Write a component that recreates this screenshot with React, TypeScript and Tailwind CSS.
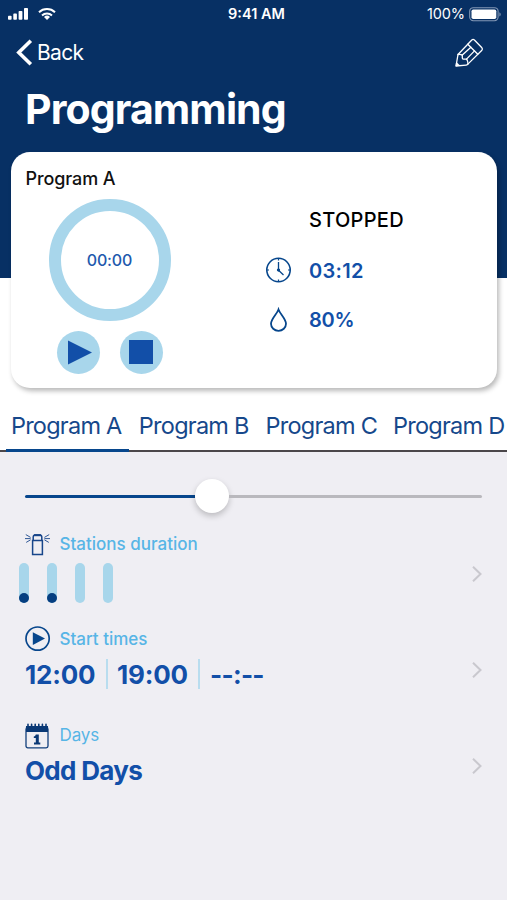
import React from 'react';

interface RowProps {
  icon: React.ReactNode;
  label: string;
  headClass: string;
  labelClass: string;
  children: React.ReactNode;
}

const PROGRAMS = [
  { name: 'Program A', active: true },
  { name: 'Program B', active: false },
  { name: 'Program C', active: false },
  { name: 'Program D', active: false },
];

const STATIONS = [true, true, false, false];

const SignalIcon = () => (
  <svg width="21" height="14" viewBox="0 0 21 14" fill="#fff">
    <rect x="0" y="8.8" width="3.6" height="4" rx="0.8" />
    <rect x="5.3" y="6.6" width="3.6" height="6.2" rx="0.8" />
    <rect x="10.6" y="4" width="3.8" height="8.8" rx="0.8" />
    <rect x="16" y="1" width="4" height="11.8" rx="0.8" />
  </svg>
);

const WifiIcon = () => (
  <svg width="18" height="14" viewBox="0 0 18 14" fill="none" stroke="#fff" strokeWidth="2">
    <path d="M1 5.3a11.6 11.6 0 0 1 16 0" />
    <path d="M4 8.5a7.4 7.4 0 0 1 10 0" />
    <path d="M9 13 6 10a4.4 4.4 0 0 1 6 0Z" fill="#fff" stroke="none" />
  </svg>
);

const BatteryIcon = () => (
  <svg width="32" height="15" viewBox="0 0 32 15" fill="none">
    <rect x="0.7" y="0.7" width="28.4" height="13" rx="3.6" stroke="#8297b5" strokeWidth="1.1" />
    <rect x="2.5" y="2.4" width="24.8" height="9.6" rx="1.8" fill="#fff" />
    <path d="M30.4 5.2v4.2c1-.5 1.3-1.2 1.3-2.1s-.4-1.6-1.3-2.1Z" fill="#8297b5" />
  </svg>
);

const PencilIcon = () => (
  <svg
    width="30"
    height="30"
    viewBox="0 0 30 30"
    fill="none"
    stroke="#fff"
    strokeWidth="1.3"
    strokeLinejoin="round"
    strokeLinecap="round"
  >
    <path d="M2 28 4 16.5 17.8 2q1.3-1.1 2.6 0l7.5 7.8q1 1.2 0 2.4L13.6 26.4q-.6.7-1.5.7Z" />
    <path d="M13.8 6.2 23.8 16.2" />
    <path d="M4 16.5q2.4-.6 4.3.6v3q0 1 1 1h3.4q1.4 2.3 1.2 5" />
    <path d="M8.3 17.1 16.9 9.3M12.5 21.1l8-8.2" />
    <path d="m2.8 24.6 2.6 2.7-3.2.6Z" fill="#fff" strokeWidth="0.6" />
  </svg>
);

const ClockIcon = () => (
  <svg width="26" height="26" viewBox="0 0 26 26" fill="none" stroke="#06468c">
    <circle cx="12.5" cy="13" r="11.7" strokeWidth="1.6" />
    <path d="M12.5 5v8.3l5 4.6" strokeWidth="1.3" />
    <path d="M12.5 1.4v2M12.5 22.6v2M1 13h2M22 13h2" strokeWidth="1.2" />
    <circle cx="12.5" cy="13" r="1.2" fill="#06468c" />
  </svg>
);

const DropIcon = () => (
  <svg width="18" height="25" viewBox="0 0 18 25" fill="none" stroke="#06468c" strokeWidth="1.8">
    <path d="M8.5 2.5C7 7 1 12 1 16.8a7.5 7 0 0 0 15 0C16 12 10 7 8.5 2.5Z" />
  </svg>
);

const SprinklerIcon = () => (
  <svg width="26" height="24" viewBox="0 0 26 24" fill="none" stroke="#17458a">
    <path d="M8.2 7.4V4.2q0-2.2 2-2.2h4.6q2 0 2 2.2v3.2" strokeWidth="1.5" />
    <path d="M7.6 7.6h9.8v14H7.6Z" strokeWidth="1.5" />
    <path d="M9 2.2h7" strokeWidth="2" />
    <path
      d="M5.6 4.4.8 1.6M5.6 5.6H0M5.6 6.8 1.2 9.4M19.4 4.4l4.8-2.8M19.4 5.6H25M19.4 6.8l4.4 2.6"
      strokeWidth="0.9"
    />
  </svg>
);

const StartIcon = () => (
  <svg width="26" height="26" viewBox="0 0 26 26" fill="none">
    <circle cx="12.6" cy="12.6" r="11.6" stroke="#07468c" strokeWidth="1.7" />
    <path d="M7.8 6.2v12.8L20 12.6Z" fill="#07468c" />
  </svg>
);

const CalendarIcon = () => (
  <svg width="24" height="27" viewBox="0 0 24 27" fill="none">
    <rect x="1" y="5.5" width="22" height="20.3" rx="1.8" stroke="#123f7c" strokeWidth="1.3" />
    <path d="M1 4h22v6H1Z" fill="#0a3875" />
    <path
      d="M3 5V2.2M6.6 5V2.2M10.2 5V2.2M13.8 5V2.2M17.4 5V2.2M21 5V2.2"
      stroke="#0a3875"
      strokeWidth="1.6"
      strokeLinecap="round"
    />
    <path d="M10.8 12.6h3v8h1.5v1.9H9v-1.9h1.8v-4.5H8.8v-1.7c1.2 0 1.8-.7 2-1.8Z" fill="#0a3875" />
  </svg>
);

const ChevronIcon = () => (
  <svg width="10" height="18" viewBox="0 0 10 18" fill="none" stroke="#c9c8ce" strokeWidth="2">
    <path d="m1 1.8 7.5 7.2L1 16.2" />
  </svg>
);

const SettingRow: React.FC<RowProps> = ({ icon, label, headClass, labelClass, children }) => (
  <div className="flex h-24 items-center justify-between pl-[25px] pr-[25px]">
    <div className="h-24">
      <div className={`flex items-center ${headClass}`}>
        <span className="flex w-[34.5px] items-center">{icon}</span>
        <span className={labelClass}>{label}</span>
      </div>
      {children}
    </div>
    <ChevronIcon />
  </div>
);

export default function App() {
  return (
    <div className="h-[900px] w-[507px] overflow-hidden bg-[#efeef3] font-['Inter',sans-serif]">
      <div className="h-[452px] bg-white">
        {/* Header */}
        <header className="h-[278px] bg-[#073064] text-white">
          <div className="grid h-7 grid-cols-3 items-center pl-2 pr-[6px]">
            <div className="flex items-center gap-[9px]">
              <SignalIcon />
              <WifiIcon />
            </div>
            <span className="pl-1 text-center text-[14.5px] font-semibold">9:41 AM</span>
            <div className="flex items-center justify-end gap-1">
              <span className="text-[14.5px] tracking-[-0.1px]">100%</span>
              <BatteryIcon />
            </div>
          </div>
          <div className="flex h-[49px] items-center justify-between pl-4 pr-[23px]">
            <button className="flex items-center gap-1">
              <svg width="17" height="27" viewBox="0 0 17 27" fill="none" stroke="#fff" strokeWidth="3.6">
                <path d="M14.8 1.8 2.8 13.5l12 11.7" />
              </svg>
              <span className="text-[21px] tracking-[-0.7px]">Back</span>
            </button>
            <PencilIcon />
          </div>
          <h1 className="pl-[25px] pt-[7px] text-[41px] font-bold leading-[50px] tracking-[-0.9px]">
            Programming
          </h1>
        </header>

        <div className="-mt-[126px] h-[246px] px-[10.5px]">
          {/* Status card */}
          <section className="relative flex h-[236px] rounded-[19px] bg-white shadow-[2px_3px_5px_rgba(0,0,0,0.28)]">
            <div className="w-[255px] pl-[15px] pt-[14px]">
              <h2 className="text-[18px] font-medium leading-[25px] tracking-[-0.1px] text-[#111]">Program A</h2>
              <div className="ml-[23px] mt-2 flex size-[122px] items-center justify-center rounded-full border-[12px] border-[#a8d6eb]">
                <span className="text-[16px] font-medium tracking-[-0.1px] text-[#2159ad]">00:00</span>
              </div>
              <div className="ml-[31.5px] mt-[9.5px] flex gap-[19.5px]">
                <button className="flex size-[43px] items-center justify-center rounded-full bg-[#a8d6eb] pl-[2px]">
                  <svg width="24" height="25" viewBox="0 0 24 25" fill="#124fa8">
                    <path d="M0 .4v24.2l24-12.1Z" />
                  </svg>
                </button>
                <button className="flex size-[43px] items-center justify-center rounded-full bg-[#a8d6eb]">
                  <span className="size-6 bg-[#124fa8]" />
                </button>
              </div>
            </div>
            <div className="pt-[52px]">
              <p className="pl-[43.5px] text-[20px] font-medium leading-8 tracking-[0.3px] text-black">
                STOPPED
              </p>
              <div className="mt-[9px] flex h-[50px] items-center">
                <span className="flex w-[43.5px]">
                  <ClockIcon />
                </span>
                <span className="pt-[2px] text-[20px] font-semibold tracking-[0.3px] text-[#124fa8]">03:12</span>
              </div>
              <div className="flex h-[49px] items-center">
                <span className="flex w-[43.5px] pl-1">
                  <DropIcon />
                </span>
                <span className="text-[20px] font-semibold tracking-[-0.2px] text-[#124fa8]">80%</span>
              </div>
            </div>
          </section>
        </div>

        {/* Program tabs */}
        <nav className="flex h-[54px] gap-[5px] border-b-2 border-[#4b474a] pl-[6px]">
          {PROGRAMS.map((program) => (
            <button
              key={program.name}
              className={`h-[54px] w-[122.5px] shrink-0 whitespace-nowrap border-b-[3px] pr-[2px] pt-1 text-[23.5px] tracking-[-0.75px] text-[#16488b] ${
                program.active ? 'border-[#07468c]' : 'border-transparent'
              }`}
            >
              {program.name}
            </button>
          ))}
        </nav>
      </div>

      {/* Water budget slider */}
      <div className="flex h-[74px] items-center pl-[25px] pt-[14px]">
        <div className="mt-[1px] h-[3px] w-[170px] rounded-l bg-[#07468c]" />
        <div className="size-[34px] rounded-full bg-white shadow-[0_3px_6px_rgba(0,0,0,0.22)]" />
        <div className="mt-[1px] h-[3px] w-[253px] rounded-r bg-[#b9b8bd]" />
      </div>

      <SettingRow
        icon={<SprinklerIcon />}
        label="Stations duration"
        headClass="h-[37px]"
        labelClass="text-[17px] font-medium text-[#57b5e6]"
      >
        <div className="-ml-[6px] flex gap-[18px]">
          {STATIONS.map((running, i) => (
            <div key={i} className="flex h-10 w-[10px] items-end rounded-full bg-[#a8d6eb]">
              {running && <span className="size-[10px] rounded-full bg-[#053e80]" />}
            </div>
          ))}
        </div>
      </SettingRow>
      <SettingRow
        icon={<StartIcon />}
        label="Start times"
        headClass="h-[34px]"
        labelClass="pt-[2px] text-[17px] font-medium text-[#57b5e6]"
      >
        <div className="flex h-[36px] items-center text-[26px] font-bold tracking-[-0.2px] text-[#124fa8]">
          <span className="w-[81px]">12:00</span>
          <span className="mr-[9px] h-[30px] w-[2px] bg-[#b9ddef]" />
          <span className="w-[81px]">19:00</span>
          <span className="mr-[10px] h-[30px] w-[2px] bg-[#b9ddef]" />
          <span className="tracking-[-0.7px]">--:--</span>
        </div>
      </SettingRow>
      <SettingRow
        icon={<CalendarIcon />}
        label="Days"
        headClass="h-[34px]"
        labelClass="pt-[2px] text-[17px] tracking-[-0.1px] text-[#57b5e6]"
      >
        <p className="text-[26px] font-bold leading-[38px] tracking-[-0.7px] text-[#124fa8]">Odd Days</p>
      </SettingRow>
    </div>
  );
}
